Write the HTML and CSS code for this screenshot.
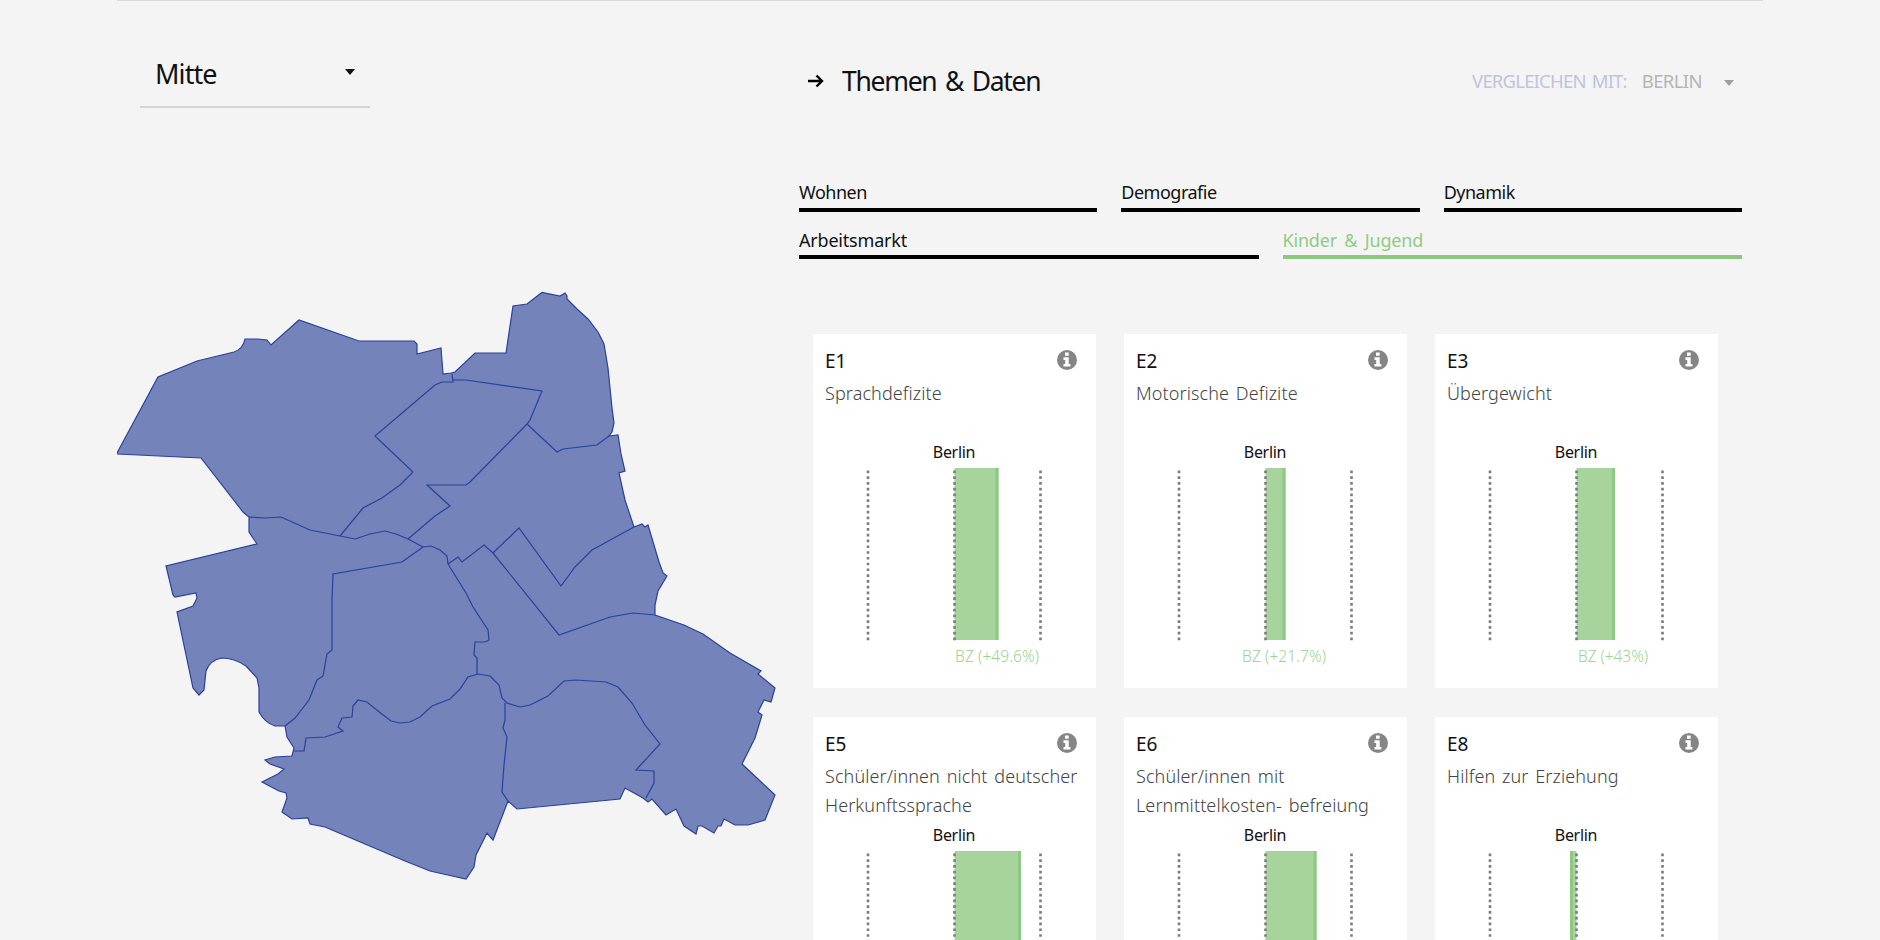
FILE: index.html
```html
<!DOCTYPE html>
<html lang="de">
<head>
<meta charset="utf-8">
<title>Mitte – Themen &amp; Daten</title>
<link rel="stylesheet" href="styles.css">
</head>
<body>
<svg width="0" height="0" class="defs">
  <symbol id="info" viewBox="0 0 20 20"><circle cx="10" cy="10" r="10" fill="#858585"/><path fill="#fff" d="M8 2.600h3.700v3.200H8zM6.500 7.300h5.200v6.700h1.700v2.600H6.500V14h1.700V9.900H6.500z"/></symbol>
</svg>
<main class="page">
  <section class="left">
    <div class="district"><span class="t-mitte">Mitte</span><svg class="caret" width="10" height="6" viewBox="0 0 10 6"><path d="M0 0H10L5 6Z"/></svg></div>
    <svg class="map" width="665" height="600" viewBox="115 285 665 600">
      <path class="area" d="M117 453L158 377L197 361L234 352Q243 349 245 339H258L267 340L271 345L299 320L359 341H414L417 344V354L441 348L443 374L451 373L455 372L475 353H506L513 306L527 304L542 292.500L560 296L565 293L567 296V299L577 309L588 319L598 332L604 344L608 368L610 388L612 408L614 423L612 432L609 436L618 435L621 454L625 471L619 473L625 500L634 527L642 524L645 527L648 525L659 562L663 573L667 576L658 591L655 605V615L684 625L703 634L730 653L761 671L758 674L775 688L771 702L764 700L758 712L762 715L755 738L742 764L775 795L765 820L755 823L748 825H735L724 819L721 826H718L714 833L702 826H698L696 834L684 826L676 809L666 815L652 799L648 802L643 798L625 788L620 799L517 809L508 801L493 840L487 833L476 855L474 867L466 879L430 871L405 861L325 827L310 824L308 818L292 819L282 812L287 798L286 793L279 791L262 782L278 774L284 769L270 764L265 760L275 757L292 756L294 748L287 737L285 726H275Q265 723 259 712V688L257 678L246 666Q234 658 222 658Q210 660 206 671L204 690L199 695L193 688L177 612L193 606L197 598L196 593L175 597L173 595L166 566L257 544L249 532V517L243 512L201 458L117 454Z"/>
      <path class="lines" d="M249 517L265 518L281 517L310 530L340 536L355 539L370 534L385 531L396 534L408 539L423 547M340 536L363 508L382 498L400 485L413 472L375 436L435 385L442 382H453L452 374M453 380H466L542 391L530 420L527 424L470 482L466 485H427L450 506L435 516L408 539M527 424L557 452L563 449L597 445L609 436M423 547L431 546L440 550L447 556L448 564M423 547L402 562L333 574L332 600V650L327 654L323 676L317 680L309 700L295 718L285 726M294 751H304L306 738L325 737L343 731L338 727L342 718L352 717L353 706L358 700L367 702L378 711L391 721L400 723L410 722L420 717L432 706L450 699L460 689L468 677L478 674L490 676L499 685L502 698L507 703L520 707L530 705L548 696L564 681L576 680L606 682L618 687L632 703L645 725L660 744L636 770L654 771V783L646 798M448 564L466 593L473 607L488 630L489 640L485 642H475L474 655L477 658V674M448 564L458 557L462 562L484 545L493 553L519 528L561 586L575 567L592 550L634 527M493 553L559 635L610 617L633 613L655 615M505 703V720L503 728L507 737L504 765L502 792L508 801"/>
    </svg>
  </section>
  <section class="right">
    <header class="head">
      <svg class="arrow" width="16" height="14" viewBox="0 0 16 14"><path d="M0 7H14M8.500 1.500L14 7L8.500 12.500"/></svg>
      <h1 class="t-title">Themen &amp; Daten</h1>
      <div class="compare"><span class="label">VERGLEICHEN MIT:</span><span class="value">BERLIN</span><svg class="caret" width="10" height="6" viewBox="0 0 10 6"><path d="M0 0H10L5 6Z"/></svg></div>
    </header>
    <nav class="tabs">
      <div class="tabrow"><a class="tab">Wohnen</a><a class="tab">Demografie</a><a class="tab">Dynamik</a></div>
      <div class="tabrow"><a class="tab wide">Arbeitsmarkt</a><a class="tab wide active">Kinder &amp; Jugend</a></div>
    </nav>
    <div class="cards">
      <article class="card"><div class="top"><b>E1</b><svg class="info"><use href="#info"/></svg></div><p>Sprachdefizite</p>
        <svg class="chart" viewBox="0 0 282 210"><text class="ref" x="141" y="15">Berlin</text><rect class="bar" x="141.500" y="25" width="44" height="172"/><path class="edge" d="M184 25V197"/><path class="dots" d="M55 27.500V198M141.500 27.500V198M227.500 27.500V198"/><text class="val" x="184" y="219" textLength="84">BZ (+49.6%)</text></svg></article>
      <article class="card"><div class="top"><b>E2</b><svg class="info"><use href="#info"/></svg></div><p>Motorische Defizite</p>
        <svg class="chart" viewBox="0 0 282 210"><text class="ref" x="141" y="15">Berlin</text><rect class="bar" x="141.500" y="25" width="20" height="172"/><path class="edge" d="M160 25V197"/><path class="dots" d="M55 27.500V198M141.500 27.500V198M227.500 27.500V198"/><text class="val" x="160" y="219" textLength="84">BZ (+21.7%)</text></svg></article>
      <article class="card"><div class="top"><b>E3</b><svg class="info"><use href="#info"/></svg></div><p>Übergewicht</p>
        <svg class="chart" viewBox="0 0 282 210"><text class="ref" x="141" y="15">Berlin</text><rect class="bar" x="141.500" y="25" width="38.500" height="172"/><path class="edge" d="M178.500 25V197"/><path class="dots" d="M55 27.500V198M141.500 27.500V198M227.500 27.500V198"/><text class="val" x="178" y="219" textLength="70">BZ (+43%)</text></svg></article>
      <article class="card"><div class="top"><b>E5</b><svg class="info"><use href="#info"/></svg></div><p>Schüler/innen nicht deutscher Herkunftssprache</p>
        <svg class="chart" viewBox="0 0 282 210"><text class="ref" x="141" y="15">Berlin</text><rect class="bar" x="141.500" y="25" width="66.500" height="172"/><path class="edge" d="M206.500 25V197"/><path class="dots" d="M55 27.500V198M141.500 27.500V198M227.500 27.500V198"/></svg></article>
      <article class="card"><div class="top"><b>E6</b><svg class="info"><use href="#info"/></svg></div><p>Schüler/innen mit Lernmittelkosten- befreiung</p>
        <svg class="chart" viewBox="0 0 282 210"><text class="ref" x="141" y="15">Berlin</text><rect class="bar" x="141.500" y="25" width="51" height="172"/><path class="edge" d="M191 25V197"/><path class="dots" d="M55 27.500V198M141.500 27.500V198M227.500 27.500V198"/></svg></article>
      <article class="card"><div class="top"><b>E8</b><svg class="info"><use href="#info"/></svg></div><p>Hilfen zur Erziehung</p>
        <svg class="chart" viewBox="0 0 282 210"><text class="ref" x="141" y="15">Berlin</text><rect class="bar" x="135" y="25" width="6.500" height="172"/><path class="edge" d="M136.500 25V197"/><path class="dots" d="M55 27.500V198M141.500 27.500V198M227.500 27.500V198"/></svg></article>
    </div>
  </section>
</main>
</body>
</html>
```
FILE: styles.css
```css
* { box-sizing: border-box; }
body { margin: 0; height: 940px; overflow: hidden; background: #f4f4f4; font-family: "Noto Sans", sans-serif; color: #111; }
.defs { display: block; }
svg { display: block; flex: none; }
.page { width: 1646px; height: 940px; margin-left: 117px; border-top: 1px solid #dadada; display: flex; overflow: hidden; }
.left { width: 682px; flex: none; }
.district { width: 230px; height: 107px; margin-left: 23px; padding: 48px 15px 0; border-bottom: 2px solid #d4d4d4; display: flex; justify-content: space-between; font-size: 27px; line-height: 50px; letter-spacing: -0.9px; }
.district .caret { margin-top: 20px; }
.caret { fill: currentColor; }
.map { margin: 177px 0 0 -2px; }
.area { fill: #7483ba; stroke: #2a409c; stroke-width: 1.2; }
.lines { fill: none; stroke: #2a409c; stroke-width: 1.2; }
.right { width: 943px; flex: none; }
.head { display: flex; align-items: center; height: 40px; margin-top: 60px; padding-left: 9px; }
.arrow { fill: none; stroke: #000; stroke-width: 2.4; }
.head h1 { margin: -1px 0 0 18px; font-size: 26.5px; font-weight: 400; line-height: 40px; letter-spacing: -1.3px; word-spacing: 3px; }
.compare { margin-left: auto; margin-right: 8px; display: flex; align-items: center; font-size: 18.5px; letter-spacing: -0.6px; color: #b5b5b5; }
.compare .label { color: #bec4de; margin-right: 15px; letter-spacing: -0.8px; word-spacing: 2px; }
.compare span { margin-top: -1px; }
.compare .caret { margin: 3px 0 0 22px; color: #a0a0a0; }
.tabs { margin-top: 77px; }
.tabrow { display: flex; gap: 24px; height: 47.5px; }
.tab { flex: 1; height: 33.500px; border-bottom: 4.500px solid #000; font-size: 18px; line-height: 29px; letter-spacing: -0.5px; }
.tab.wide { letter-spacing: -0.2px; word-spacing: 3px; }
.tab.active { color: #8fcb84; border-color: #8cc880; }
.cards { margin: 61px 0 0 14px; display: grid; grid-template-columns: repeat(3, 282.500px); gap: 28.500px; }
.card { height: 354px; background: #fff; overflow: hidden; }
.top { display: flex; justify-content: space-between; padding: 16px 19px 0 12px; height: 44px; }
.top b { font-weight: 400; font-size: 19px; line-height: 22px; }
.info { width: 20px; height: 20px; }
.card p { margin: 0; padding: 1px 0 0 12px; height: 65px; font-size: 18px; font-weight: 300; line-height: 29px; letter-spacing: 0.1px; word-spacing: 2px; color: #444; }
.chart { width: 282px; height: 210px; overflow: visible; }
.chart text { text-anchor: middle; }
.ref { font-size: 16px; letter-spacing: -0.3px; fill: #111; }
.val { font-size: 15.500px; font-weight: 300; fill: #9bd392; }
.bar { fill: #a7d39c; }
.edge { stroke: #8dc982; stroke-width: 3; }
.dots { fill: none; stroke: #7c7c7c; stroke-width: 2.6; stroke-dasharray: 2.700 3.060; }
```
